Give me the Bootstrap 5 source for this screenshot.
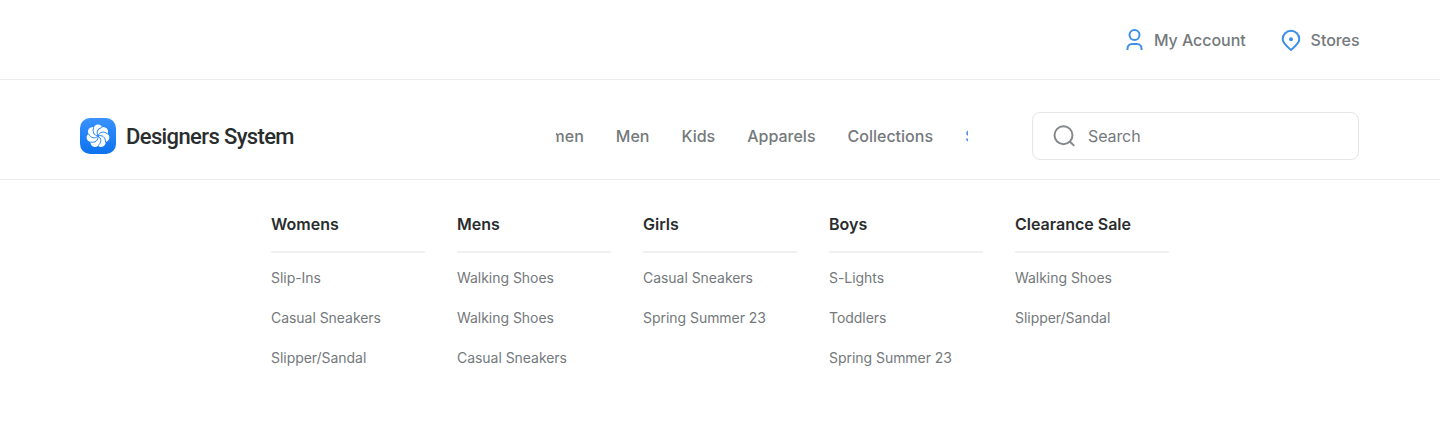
<!DOCTYPE html>
<html lang="en">
<head>
<meta charset="utf-8">
<meta name="viewport" content="width=device-width, initial-scale=1">
<title>Designers System</title>
<link href="https://cdn.jsdelivr.net/npm/bootstrap@5.3.0/dist/css/bootstrap.min.css" rel="stylesheet">
<style>
  body { font-family: Inter, "Liberation Sans", sans-serif; color: #74797c; background: #fff; overflow: hidden; }
  a { color: inherit; text-decoration: none; white-space: nowrap; }
  .topbar { height: 80px; border-bottom: 1px solid #ebecec; padding: 0 80.500px 0 80px; gap: 33px; }
  .topbar a, .scroller a { font-size: 16px; font-weight: 500; line-height: 24px; }
  .topbar a { gap: 8px; letter-spacing: -.05px; }
  .mainbar { height: 100px; border-bottom: 1px solid #ebecec; padding: 13px 80px 0; }
  .brand { gap: 10px; width: 476px; }
  .brand-name { font-family: Roboto, sans-serif; font-weight: 500; font-size: 22px; letter-spacing: -.62px; color: #2a2d2e; line-height: 36px; padding-top: 1px; }
  .scroller { width: 412px; }
  .scroller ul { gap: 32px; margin-left: -30.300px; }
  .scroller .active { color: #3a96f0; }
  .searchbox { width: 327px; height: 48px; margin-left: 64px; border: 1px solid #e4e5e6; border-radius: 8px; padding-left: 19px; }
  .searchbox input { font-size: 16px; letter-spacing: -.1px; padding: 0 0 0 12px; color: #74797c; }
  .searchbox input::placeholder { color: #74797c; opacity: 1; }
  .mega { padding: 32px 0 0 271px; gap: 32px; }
  .mega-col { width: 154px; }
  .mega h2 { font-size: 16px; font-weight: 600; line-height: 24px; color: #2a2d2e; padding-bottom: 15px; border-bottom: 2px solid #f0f0f0; margin-bottom: 13px; white-space: nowrap; }
  .mega li { font-size: 14px; line-height: 24px; height: 40px; letter-spacing: -.04px; }
</style>
</head>
<body>
<header>
  <div class="topbar d-flex align-items-center justify-content-end">
    <a href="#" class="d-flex align-items-center">
      <svg width="24" height="24" viewBox="0 0 24 24" fill="none" stroke="#3d91e8" stroke-width="2"><circle cx="12.500" cy="7" r="5"/><path d="M5.500 22v-1.500a4.500 4.500 0 0 1 4.500-4.500h5a4.500 4.500 0 0 1 4.500 4.500V22"/></svg>
      My Account</a>
    <a href="#" class="d-flex align-items-center">
      <svg width="24" height="24" viewBox="0 0 24 24" fill="none" stroke="#3d91e8" stroke-width="2"><path d="M12 22C8 18.800 3.700 15.300 3.700 11.100a8.300 8.300 0 0 1 16.600 0C20.300 15.300 16 18.800 12 22Z"/><circle cx="12" cy="11.200" r="2" fill="#3d91e8" stroke="none"/></svg>
      Stores</a>
  </div>
  <div class="mainbar d-flex align-items-center">
    <a href="#" class="brand d-flex align-items-center flex-shrink-0">
      <svg width="36" height="36" viewBox="0 0 36 36">
        <defs>
          <linearGradient id="tile" x1="0" y1="0" x2="0" y2="1"><stop offset="0" stop-color="#3a92ff"/><stop offset="1" stop-color="#0c72ee"/></linearGradient>
          <path id="swirl" d="M0 0C-3.500-2.500-3.200-7 .8-9.600"/>
        </defs>
        <rect width="36" height="36" rx="10" fill="url(#tile)"/>
        <g transform="translate(18 18)">
          <g fill="#fff"><circle r="8"/><circle cy="-7.200" r="4.400"/><circle cy="-7.200" r="4.400" transform="rotate(51.430)"/><circle cy="-7.200" r="4.400" transform="rotate(102.860)"/><circle cy="-7.200" r="4.400" transform="rotate(154.290)"/><circle cy="-7.200" r="4.400" transform="rotate(205.710)"/><circle cy="-7.200" r="4.400" transform="rotate(257.140)"/><circle cy="-7.200" r="4.400" transform="rotate(308.570)"/></g>
          <g fill="none" stroke="#1f80f8" stroke-width=".9" transform="rotate(20.900)"><use href="#swirl"/><use href="#swirl" transform="rotate(51.430)"/><use href="#swirl" transform="rotate(102.860)"/><use href="#swirl" transform="rotate(154.290)"/><use href="#swirl" transform="rotate(205.710)"/><use href="#swirl" transform="rotate(257.140)"/><use href="#swirl" transform="rotate(308.570)"/></g>
        </g>
      </svg>
      <span class="brand-name">Designers System</span>
    </a>
    <nav class="scroller overflow-hidden flex-shrink-0">
      <ul class="list-unstyled d-flex mb-0">
        <li><a href="#">Women</a></li>
        <li><a href="#">Men</a></li>
        <li><a href="#">Kids</a></li>
        <li><a href="#">Apparels</a></li>
        <li><a href="#">Collections</a></li>
        <li><a href="#" class="active">Sale</a></li>
      </ul>
    </nav>
    <form class="searchbox d-flex align-items-center flex-shrink-0">
      <svg width="24" height="24" viewBox="0 0 24 24" fill="none" stroke="#85898c" stroke-width="2" class="flex-shrink-0"><circle cx="11.500" cy="11.200" r="9"/><path d="m17.800 17.500 4.400 4.400"/></svg>
      <input class="form-control border-0 bg-transparent shadow-none" type="text" placeholder="Search" aria-label="Search">
    </form>
  </div>
</header>
<main class="mega d-flex">
  <section class="mega-col"><h2>Womens</h2><ul class="list-unstyled mb-0"><li><a href="#">Slip-Ins</a></li><li><a href="#">Casual Sneakers</a></li><li><a href="#">Slipper/Sandal</a></li></ul></section>
  <section class="mega-col"><h2>Mens</h2><ul class="list-unstyled mb-0"><li><a href="#">Walking Shoes</a></li><li><a href="#">Walking Shoes</a></li><li><a href="#">Casual Sneakers</a></li></ul></section>
  <section class="mega-col"><h2>Girls</h2><ul class="list-unstyled mb-0"><li><a href="#">Casual Sneakers</a></li><li><a href="#">Spring Summer 23</a></li></ul></section>
  <section class="mega-col"><h2>Boys</h2><ul class="list-unstyled mb-0"><li><a href="#">S-Lights</a></li><li><a href="#">Toddlers</a></li><li><a href="#">Spring Summer 23</a></li></ul></section>
  <section class="mega-col"><h2>Clearance Sale</h2><ul class="list-unstyled mb-0"><li><a href="#">Walking Shoes</a></li><li><a href="#">Slipper/Sandal</a></li></ul></section>
</main>
<script src="https://cdn.jsdelivr.net/npm/bootstrap@5.3.0/dist/js/bootstrap.bundle.min.js"></script>
</body>
</html>
